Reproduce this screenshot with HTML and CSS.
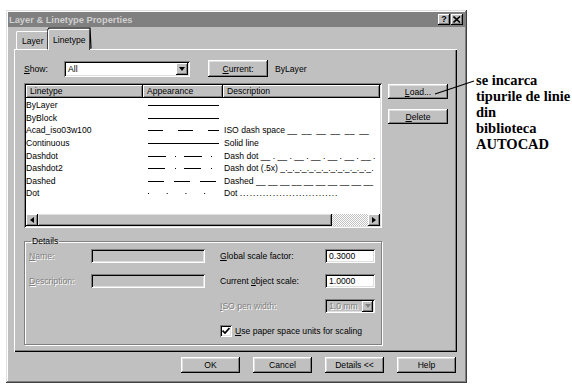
FILE: index.html
```html
<!DOCTYPE html>
<html lang="ro">
<head>
  <meta charset="UTF-8">
  <title>Layer &amp; Linetype Properties</title>
  <link rel="stylesheet" href="styles.css">
</head>
<body>
<div class="page">

  <div class="dialog">
    <!-- bara de titlu -->
    <div class="titlebar">
      <span class="title">Layer &amp; Linetype Properties</span>
      <span class="title-btns">
        <span class="tbtn">?</span>
        <span class="tbtn close">
          <svg width="8" height="7" viewBox="0 0 8 7"><path d="M0.5 0.5 L7 6.5 M7 0.5 L0.5 6.5" stroke="#000" stroke-width="1.6"/></svg>
        </span>
      </span>
    </div>

    <!-- tab-uri -->
    <div class="tabs">
      <div class="tab">Layer</div>
      <div class="tab active">Linetype</div>
    </div>

    <div class="panel">
      <div class="left-col">
        <div class="show-row">
          <span class="show-label"><u>S</u>how:</span>
          <div class="combo">
            <span class="combo-text">All</span>
            <span class="combo-arrow"><i class="tri-down"></i></span>
          </div>
          <div class="btn current-btn"><u>C</u>urrent:</div>
          <span class="current-val">ByLayer</span>
        </div>

        <!-- lista tipurilor de linie -->
        <div class="list">
          <div class="list-head">
            <div class="hcell c1">Linetype</div>
            <div class="hcell c2">Appearance</div>
            <div class="hcell c3">Description</div>
          </div>
          <div class="rows">
            <div class="row">
              <span class="c1">ByLayer</span>
              <svg class="c2" width="80" height="12"><line x1="5" y1="6.5" x2="76" y2="6.5"/></svg>
              <span class="c3"></span>
            </div>
            <div class="row">
              <span class="c1">ByBlock</span>
              <svg class="c2" width="80" height="12"><line x1="5" y1="6.5" x2="76" y2="6.5"/></svg>
              <span class="c3"></span>
            </div>
            <div class="row">
              <span class="c1">Acad_iso03w100</span>
              <svg class="c2" width="80" height="12"><line x1="5" y1="6.5" x2="76" y2="6.5" stroke-dasharray="15 15"/></svg>
              <span class="c3">ISO dash space __  __  __  __  __  __</span>
            </div>
            <div class="row">
              <span class="c1">Continuous</span>
              <svg class="c2" width="80" height="12"><line x1="5" y1="6.5" x2="76" y2="6.5"/></svg>
              <span class="c3">Solid line</span>
            </div>
            <div class="row">
              <span class="c1">Dashdot</span>
              <svg class="c2" width="80" height="12"><line x1="5" y1="6.5" x2="77" y2="6.5" stroke-dasharray="18 9 1 8"/></svg>
              <span class="c3">Dash dot __ . __ . __ . __ . __ . __ . __ .</span>
            </div>
            <div class="row">
              <span class="c1">Dashdot2</span>
              <svg class="c2" width="80" height="12"><line x1="5" y1="6.5" x2="77" y2="6.5" stroke-dasharray="17 10 1 8"/></svg>
              <span class="c3">Dash dot (.5x) _._._._._._._._._._._._._.</span>
            </div>
            <div class="row">
              <span class="c1">Dashed</span>
              <svg class="c2" width="80" height="12"><line x1="5" y1="6.5" x2="76" y2="6.5" stroke-dasharray="16 10"/></svg>
              <span class="c3">Dashed __ __ __ __ __ __ __ __ __ __</span>
            </div>
            <div class="row">
              <span class="c1">Dot</span>
              <svg class="c2" width="80" height="12"><line x1="5" y1="6.5" x2="76" y2="6.5" stroke-dasharray="1 17.7"/></svg>
              <span class="c3">Dot <span class="dots">..............................</span></span>
            </div>
          </div>
          <div class="hscroll">
            <span class="sbtn"><i class="tri-left"></i></span>
            <span class="thumb"></span>
            <span class="track"></span>
            <span class="sbtn"><i class="tri-right"></i></span>
          </div>
        </div>

        <!-- detalii -->
        <fieldset class="details">
          <legend>Details</legend>
          <div class="details-grid">
            <span class="lbl disabled"><u>N</u>ame:</span>
            <span class="field off"></span>
            <span class="lbl r"><u>G</u>lobal scale factor:</span>
            <span class="field num">0.3000</span>

            <span class="lbl disabled"><u>D</u>escription:</span>
            <span class="field off"></span>
            <span class="lbl r">Current <u>o</u>bject scale:</span>
            <span class="field num">1.0000</span>

            <span class="lbl r disabled"><u>I</u>SO pen width:</span>
            <span class="field off pen">
              <span class="pen-text">1.0 mm</span>
              <span class="combo-arrow dim"><i class="tri-down"></i></span>
            </span>

            <span class="check-row">
              <span class="checkbox">
                <svg width="8" height="8" viewBox="0 0 8 8"><path d="M0.5 3.5 L3 6 L7.5 1" fill="none" stroke="#000" stroke-width="1.7"/></svg>
              </span>
              <span><u>U</u>se paper space units for scaling</span>
            </span>
          </div>
        </fieldset>
      </div>

      <div class="right-col">
        <div class="btn side-btn"><u>L</u>oad...</div>
        <div class="btn side-btn"><u>D</u>elete</div>
      </div>
    </div>

    <div class="buttons">
      <div class="btn">OK</div>
      <div class="btn">Cancel</div>
      <div class="btn">Details &lt;&lt;</div>
      <div class="btn">Help</div>
    </div>
  </div>

  <div class="note">
    se incarca<br>
    tipurile de linie<br>
    din<br>
    biblioteca<br>
    AUTOCAD
  </div>

  <!-- adnotari desenate peste captura -->
  <svg class="overlay" width="572" height="392">
    <line x1="435" y1="94" x2="474" y2="81" stroke="#000" stroke-width="1.3"/>
    <polyline points="48,30 49,28 90,28 91,48 48,49 48,29" fill="none" stroke="#000" stroke-width="1.2"/>
  </svg>
</div>
</body>
</html>
```

FILE: styles.css
```css
/* baza */
body {
  margin: 0;
  background: #fff;
  font-family: "Liberation Sans", Arial, sans-serif;
  font-size: 8.6px;
  color: #000;
}

.page {
  position: relative;
  display: flex;
  align-items: flex-start;
  width: 572px;
  height: 392px;
  box-sizing: border-box;
  padding: 10px 0 0 6px;
}

/* fereastra de dialog */
.dialog {
  width: 461px;
  height: 373px;
  box-sizing: border-box;
  padding: 2px;
  background: #c0c0c0;
  box-shadow: inset -1px -1px #404040, inset 1px 1px #dfdfdf, inset -2px -2px #808080, inset 2px 2px #fff;
  display: flex;
  flex-direction: column;
}

.titlebar {
  height: 15px;
  background: #808080;
  display: flex;
  align-items: center;
  justify-content: space-between;
  padding: 0 2px 0 1px;
}
.title {
  color: #cfcfcf;
  font-weight: bold;
  font-size: 9.3px;
}
.title-btns {
  display: flex;
  gap: 1px;
}
.tbtn {
  width: 12px;
  height: 11px;
  background: #c0c0c0;
  box-shadow: inset -1px -1px #000, inset 1px 1px #fff, inset -2px -2px #808080;
  display: flex;
  align-items: center;
  justify-content: center;
  font-weight: bold;
  font-size: 9px;
  line-height: 1;
}

/* tab-uri */
.tabs {
  height: 22px;
  display: flex;
  align-items: flex-end;
  padding-left: 8px;
  position: relative;
  z-index: 1;
}
.tab {
  height: 18px;
  box-sizing: border-box;
  padding: 4px 5px 0;
  border-top: 1px solid #fff;
  border-left: 1px solid #fff;
  border-right: 1px solid #404040;
  border-radius: 2px 2px 0 0;
  background: #c0c0c0;
}
.tab:first-child {
  width: 32px;
}
.tab.active {
  height: 21px;
  width: 42px;
  margin-bottom: -1px;
  padding-top: 5px;
  padding-left: 4px;
}

.panel {
  height: 303px;
  box-sizing: border-box;
  margin: 0 8px 0 6px;
  padding: 11px 0 0 10px;
  box-shadow: inset 1px 1px #fff, inset -1px -1px #000, inset -2px -2px #808080;
  display: flex;
}

.left-col {
  width: 358px;
  display: flex;
  flex-direction: column;
}
.right-col {
  margin-left: 6px;
  padding-top: 24px;
  display: flex;
  flex-direction: column;
  gap: 10px;
}

/* butoane */
.btn {
  background: #c0c0c0;
  box-shadow: inset -1px -1px #000, inset 1px 1px #fff, inset -2px -2px #808080, inset 2px 2px #dfdfdf;
  display: flex;
  align-items: center;
  justify-content: center;
  width: 59px;
  height: 16px;
}
.side-btn {
  width: 60px;
  height: 15px;
}

/* randul Show */
.show-row {
  height: 17px;
  display: flex;
  align-items: center;
}
.show-label {
  width: 40px;
}
.combo {
  width: 126px;
  height: 16px;
  box-sizing: border-box;
  background: #fff;
  box-shadow: inset 1px 1px #808080, inset -1px -1px #fff, inset 2px 2px #000, inset -2px -2px #dfdfdf;
  display: flex;
  align-items: center;
  justify-content: space-between;
  padding: 2px;
}
.combo-text {
  padding-left: 2px;
}
.combo-arrow {
  width: 12px;
  height: 12px;
  background: #c0c0c0;
  box-shadow: inset -1px -1px #000, inset 1px 1px #fff, inset -2px -2px #808080;
  display: flex;
  align-items: center;
  justify-content: center;
}
.tri-down {
  border-left: 3.5px solid transparent;
  border-right: 3.5px solid transparent;
  border-top: 4px solid #000;
}
.combo-arrow.dim .tri-down {
  border-top-color: #808080;
}
.current-btn {
  margin-left: 18px;
  width: 60px;
  height: 17px;
}
.current-val {
  margin-left: 7px;
}

/* lista */
.list {
  margin-top: 6px;
  height: 145px;
  box-sizing: border-box;
  padding: 2px;
  background: #fff;
  box-shadow: inset 1px 1px #808080, inset -1px -1px #fff, inset 2px 2px #000, inset -2px -2px #dfdfdf;
  display: flex;
  flex-direction: column;
}
.list-head {
  display: flex;
  height: 13px;
}
.c1 { width: 117px; flex: none; }
.c2 { width: 80px; flex: none; }
.c3 { flex: 1; min-width: 0; }
.hcell {
  background: #c0c0c0;
  box-shadow: inset -1px -1px #000, inset 1px 1px #fff, inset -2px -2px #808080;
  padding-left: 4px;
  box-sizing: border-box;
  line-height: 13px;
}
.rows {
  flex: 1;
  padding-top: 1px;
}
.row {
  display: flex;
  align-items: center;
  height: 12.6px;
  white-space: pre;
}
.row svg line {
  stroke: #000;
  stroke-width: 1;
}
.row .c3 {
  padding-left: 1px;
}
.dots {
  letter-spacing: 0.9px;
}

.hscroll {
  height: 12px;
  display: flex;
  background: #c0c0c0;
}
.sbtn {
  width: 12px;
  height: 12px;
  background: #c0c0c0;
  box-shadow: inset -1px -1px #000, inset 1px 1px #fff, inset -2px -2px #808080;
  display: flex;
  align-items: center;
  justify-content: center;
}
.thumb {
  width: 294px;
  box-shadow: inset -1px -1px #000, inset 1px 1px #dfdfdf, inset -2px -2px #808080;
}
.track {
  flex: 1;
  background: repeating-conic-gradient(#fff 0 25%, #c0c0c0 0 50%) 0 0 / 2px 2px;
}
.tri-left {
  border-top: 3.5px solid transparent;
  border-bottom: 3.5px solid transparent;
  border-right: 4px solid #000;
}
.tri-right {
  border-top: 3.5px solid transparent;
  border-bottom: 3.5px solid transparent;
  border-left: 4px solid #000;
}

/* detalii */
.details {
  margin: 8px 0 0;
  height: 109px;
  box-sizing: border-box;
  padding: 3px 0 0 4px;
  border: 1px solid #808080;
  box-shadow: inset 1px 1px #fff, 1px 1px #fff;
}
.details legend {
  padding: 0 1px;
  margin-left: 2px;
  line-height: 10px;
}
.details-grid {
  display: grid;
  grid-template-columns: 62px 114px 15px 105px 50px;
  grid-template-rows: 14px 14px 14px 13px;
  row-gap: 11px;
  align-items: center;
}
.lbl.r {
  grid-column: 4;
}
.lbl.disabled {
  color: #808080;
  text-shadow: 1px 1px #fff;
}
.field {
  height: 14px;
  box-sizing: border-box;
  background: #fff;
  box-shadow: inset 1px 1px #808080, inset -1px -1px #fff, inset 2px 2px #000, inset -2px -2px #dfdfdf;
  display: flex;
  align-items: center;
  padding-left: 4px;
}
.field.off {
  background: #c0c0c0;
}
.field.pen {
  grid-column: 5;
  justify-content: space-between;
  padding: 1px 2px 1px 4px;
  color: #808080;
  text-shadow: 1px 1px #fff;
}
.pen .combo-arrow {
  width: 11px;
  height: 11px;
}
.check-row {
  grid-column: 4 / 6;
  display: flex;
  align-items: center;
  gap: 3px;
}
.checkbox {
  width: 12px;
  height: 12px;
  box-sizing: border-box;
  background: #fff;
  box-shadow: inset 1px 1px #808080, inset -1px -1px #fff, inset 2px 2px #000, inset -2px -2px #dfdfdf;
  display: flex;
  align-items: center;
  justify-content: center;
}

/* randul de butoane de jos */
.buttons {
  margin-top: 5px;
  display: flex;
  justify-content: flex-end;
  gap: 13px;
  padding-right: 9px;
}

/* nota explicativa */
.note {
  margin-left: 9px;
  padding-top: 62px;
  font-family: "Liberation Serif", "Times New Roman", serif;
  font-weight: bold;
  font-size: 14.5px;
  line-height: 16px;
}

.overlay {
  position: absolute;
  left: 0;
  top: 0;
  pointer-events: none;
}
```
